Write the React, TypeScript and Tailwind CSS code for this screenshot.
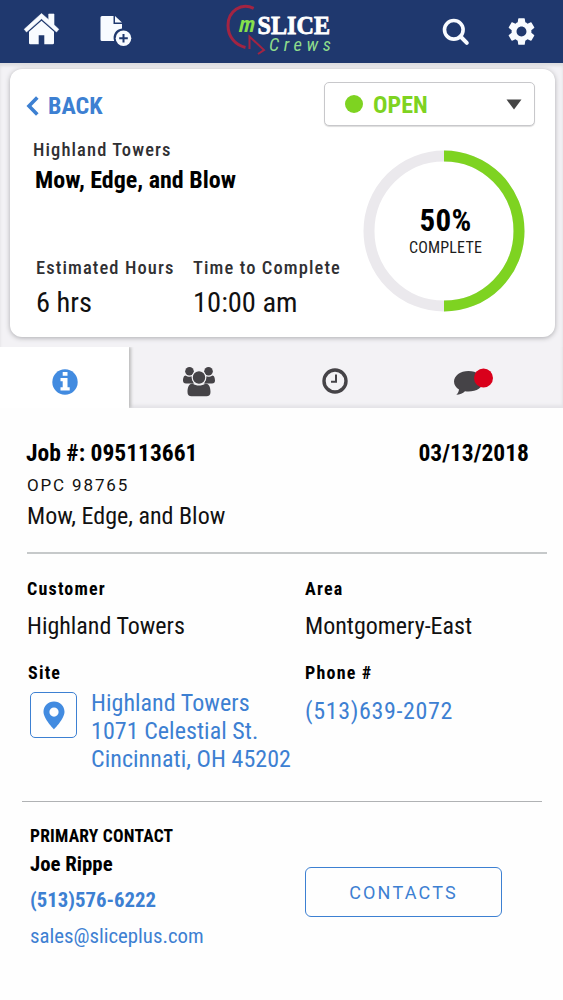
import React from "react";
import { MdSettings } from "react-icons/md";

const sans = "font-['Roboto_Condensed','Roboto',sans-serif] [font-stretch:75%]";

function HomeIcon() {
  return (
    <svg width="37" height="34" viewBox="0 0 37 34" fill="#f8fbff">
      <path d="M18.500 1.500L1.200 17.300l2.300 2.700L18.500 6.800l15 13.200 2.300-2.700-4.800-4.500V2h-5.300v5.800Z" strokeLinejoin="round" stroke="#f8fbff" strokeWidth=".6" />
      <path d="M18.500 8.800L6 19.800V31a1.300 1.300 0 0 0 1.300 1.300h8.400v-9h5.600v9h8.400A1.300 1.300 0 0 0 31 31V19.800Z" />
    </svg>
  );
}

function FilePlusIcon() {
  return (
    <svg width="32" height="32" viewBox="0 0 32 32" fill="#f8fbff">
      <path d="M2 1h11.500v8H22v4.500A9.200 9.200 0 0 0 14.200 26H2a1.500 1.500 0 0 1-1.500-1.500v-22A1.500 1.500 0 0 1 2 1Z" />
      <path d="M15 1l7 6.500H15Z" />
      <circle cx="23.500" cy="23.300" r="7.800" />
      <path d="M23.500 19v8.600M19.200 23.300h8.600" stroke="#1f386e" strokeWidth="2" />
    </svg>
  );
}

function SearchIcon() {
  return (
    <svg width="28" height="28" viewBox="0 0 28 28" fill="none" stroke="#f8fbff">
      <circle cx="11.800" cy="11.800" r="9.300" strokeWidth="3.600" />
      <path d="M18.500 18.500l6.300 6.300" strokeWidth="4" strokeLinecap="round" />
    </svg>
  );
}

function Logo() {
  return (
    <svg width="112" height="56" viewBox="0 0 112 56">
      <g fill="none" stroke="#a32442">
        <path d="M33.700 5.300C21-.5 8 8 8 22.500c0 11.500 7.500 19.500 17.500 22" strokeWidth="3" />
        <path d="M29.500 46V33.500L44 47l-6 4" strokeWidth="2" />
      </g>
      <text x="19" y="29.300" fill="#86e04c" fontFamily="Open Sans" fontWeight="700" fontStyle="italic" fontSize="22" textLength="16" lengthAdjust="spacingAndGlyphs">m</text>
      <text x="37.500" y="31" fill="#fff" stroke="#fff" strokeWidth=".8" fontFamily="Liberation Serif" fontWeight="700" fontSize="25" textLength="72.500" lengthAdjust="spacingAndGlyphs">SLICE</text>
      <text x="49" y="47.700" fill="#8fdc8c" fontFamily="Roboto Condensed" fontStyle="italic" fontSize="18.500" textLength="62">Crews</text>
    </svg>
  );
}

function InfoIcon() {
  return (
    <svg width="26" height="26" viewBox="0 0 26 26">
      <circle cx="13" cy="13" r="12.700" fill="#428be0" />
      <path d="M10.700 3h4.800v3.700h-4.800ZM8.500 9h7v9.300h2.200v3.300H8.500v-3.300h2.200v-6H8.500Z" fill="#fff" />
    </svg>
  );
}

function PeopleIcon() {
  return (
    <svg width="34" height="32" viewBox="0 0 34 32" fill="#454347">
      <circle cx="7.500" cy="5.200" r="4.300" />
      <circle cx="26.500" cy="5.200" r="4.300" />
      <path d="M3.500 9.500c2 1.500 5 1.500 7 .8-.6 3 .3 5.700 1.800 7.200H4c-2 0-3-1-3-3 0-2 .7-5 2.500-5ZM30.500 9.500c-2 1.500-5 1.500-7 .8.600 3-.3 5.700-1.800 7.200H30c2 0 3-1 3-3 0-2-.7-5-2.500-5Z" />
      <circle cx="17" cy="11.500" r="6.800" stroke="#f3f2f5" strokeWidth="1.200" />
      <path d="M10.500 17.500c4 2.700 9 2.700 13 0 3.500.5 5 3.500 5 8.500 0 3-1.500 4.300-4 4.300h-15c-2.500 0-4-1.300-4-4.300 0-5 1.500-8 5-8.500Z" />
    </svg>
  );
}

function ClockIcon() {
  return (
    <svg width="26" height="26" viewBox="0 0 26 26" fill="none" stroke="#454347">
      <circle cx="13" cy="13" r="11" strokeWidth="3.400" />
      <path d="M14 6.500v7.300H9" strokeWidth="2" />
    </svg>
  );
}

function ChatIcon() {
  return (
    <svg width="40" height="30" viewBox="0 0 40 30">
      <path d="M15.500 4C7.300 4 1 8.700 1 14.500c0 3.300 2 6.200 5 8-.2 2.200-1.200 3.800-2.700 5.300 3.500-.1 6.500-1.500 8.700-3.500 10 1.300 18-3.200 18-9.800C30 8.700 23.700 4 15.500 4Z" fill="#454347" />
      <circle cx="30.500" cy="11" r="9.500" fill="#d9001b" />
    </svg>
  );
}

function PinIcon() {
  return (
    <svg width="22" height="29" viewBox="0 0 22 29">
      <path fillRule="evenodd" d="M11 .5C5 .5.500 5 .500 10.800.500 18 11 28.300 11 28.300S21.500 18 21.500 10.800C21.500 5 17 .5 11 .5Zm0 6a4.600 4.600 0 1 1 0 9.200 4.600 4.600 0 0 1 0-9.200Z" fill="#428be0" />
    </svg>
  );
}

function ProgressRing() {
  return (
    <div className="grid h-[162px] w-[162px] [grid-template-areas:'stack']">
      <svg className="[grid-area:stack]" width="162" height="162" viewBox="0 0 162 162" fill="none" strokeWidth="11">
        <circle cx="81" cy="81" r="75" stroke="#ebe9ed" />
        <path d="M81 6a75 75 0 0 1 0 150" stroke="#7ed321" />
      </svg>
      <div className="flex flex-col items-center pl-[3px] pt-[55px] [grid-area:stack]">
        <div className="text-[31px] font-bold leading-[32px] tracking-[0.300px] text-black">50%</div>
        <div className="mt-px text-[16px] leading-[20px] tracking-[0.200px] text-[#1c1c1c]">COMPLETE</div>
      </div>
    </div>
  );
}

export default function App() {
  return (
    <div className={`h-[1000px] w-[563px] overflow-hidden bg-[#fefefe] text-[#111] whitespace-nowrap ${sans}`}>
      <header className="flex h-[63px] items-start bg-[#1f386e]">
        <div className="ml-[23px] mt-[12px]"><HomeIcon /></div>
        <div className="ml-[40px] mt-[15px]"><FilePlusIcon /></div>
        <div className="ml-[88px] mt-[3px]"><Logo /></div>
        <div className="ml-[110px] mt-[18px]"><SearchIcon /></div>
        <MdSettings className="ml-[35px] mt-[15px] h-[33px] w-[33px] text-[#f8fbff]" />
      </header>

      <section className="h-[345px] bg-[#f3f2f5] pt-[6px] shadow-[inset_0_3px_3px_#dddde0]">
        <div className="ml-[10px] flex h-[268px] w-[545px] rounded-[12px] bg-white shadow-[0_1px_5px_#aaaaae]">
          <div className="w-[314px] shrink-0 pt-[23px]">
            <div className="ml-[16px] flex h-[28px] items-center text-[24px] font-bold leading-[28px] text-[#3d80d2]">
              <svg width="13" height="20" viewBox="0 0 13 20" fill="none" stroke="currentColor" strokeWidth="3.600">
                <path d="M11.300 1.500L3 10l8.300 8.500" />
              </svg>
              <span className="ml-[9px]">BACK</span>
            </div>
            <div className="ml-[23px] mt-[18px] text-[18.500px] font-medium leading-[24px] tracking-[1.100px] text-[#303033]">Highland Towers</div>
            <div className="ml-[25px] mt-[6px] text-[24px] font-bold leading-[24px] text-black">Mow, Edge, and Blow</div>
            <div className="mt-[64px] flex">
              <div className="ml-[26px] w-[157px] shrink-0">
                <div className="text-[18.500px] font-medium leading-[24px] tracking-[1.100px] text-[#303033]">Estimated Hours</div>
                <div className="mt-[7px] text-[28.500px] leading-[32px]">6 hrs</div>
              </div>
              <div className="shrink-0">
                <div className="text-[18.500px] font-medium leading-[24px] tracking-[1.100px] text-[#303033]">Time to Complete</div>
                <div className="mt-[7px] text-[28.500px] leading-[32px]">10:00 am</div>
              </div>
            </div>
          </div>
          <div className="pt-[13px]">
            <button className="flex h-[44px] w-[211px] items-center rounded-[5px] border border-[#c8c8cb] bg-white shadow-[0_1px_1px_#ddd]">
              <span className="ml-[20px] h-[18px] w-[18px] rounded-full bg-[#7ed321]" />
              <span className="ml-[10px] mt-[1px] w-[133px] text-left text-[24px] font-bold leading-[28px] text-[#7ed321]">OPEN</span>
              <svg width="16" height="11" viewBox="0 0 16 11"><path d="M.5.500h15L8 10.500Z" fill="#454545" /></svg>
            </button>
            <div className="ml-[39px] mt-[24px]"><ProgressRing /></div>
          </div>
        </div>
        <nav className="mt-[10px] flex h-[61px] shadow-[inset_0_-3px_3px_#e5e4e8]">
          <div className="flex w-[129px] items-center justify-center bg-white pt-[8px] shadow-[2px_0_3px_#bbb] [clip-path:inset(0_-6px_0_0)]">
            <InfoIcon />
          </div>
          <div className="ml-[53px] mt-[19px]"><PeopleIcon /></div>
          <div className="ml-[106px] mt-[21px]"><ClockIcon /></div>
          <div className="ml-[105px] mt-[20px]"><ChatIcon /></div>
        </nav>
      </section>

      <main>
        <section className="ml-[26px] mt-[31px] flex w-[503px] justify-between text-[23.500px] font-bold leading-[28px] text-black">
          <span>Job #: 095113661</span>
          <span>03/13/2018</span>
        </section>
        <div className="ml-[27px] mt-[8px] font-['Roboto',sans-serif] text-[17px] leading-[20px] tracking-[1.850px] [font-stretch:100%]">OPC 98765</div>
        <div className="ml-[27px] mt-[7px] text-[24px] leading-[28px]">Mow, Edge, and Blow</div>
        <div className="ml-[27px] mt-[22px] h-[2px] w-[520px] bg-[#c6c9ca]" />

        <section className="mt-[23px] flex h-[224px]">
          <div className="w-[305px]">
            <div className="ml-[27px] text-[18px] font-bold leading-[24px] tracking-[1.200px] text-black">Customer</div>
            <div className="ml-[27px] mt-[11px] text-[24px] leading-[28px]">Highland Towers</div>
            <div className="ml-[28px] mt-[21px] text-[18px] font-bold leading-[24px] tracking-[1.200px] text-black">Site</div>
            <div className="ml-[30px] mt-[4px] flex items-start text-[#3d80d2]">
              <div className="mt-[3px] flex h-[46px] w-[47px] items-center justify-center rounded-[5px] border-[1.500px] border-[#3d80d2]">
                <PinIcon />
              </div>
              <div className="ml-[14px] text-[24px] leading-[28.200px] tracking-[0.050px]">
                <div>Highland Towers</div>
                <div>1071 Celestial St.</div>
                <div>Cincinnati, OH 45202</div>
              </div>
            </div>
          </div>
          <div>
            <div className="text-[18px] font-bold leading-[24px] tracking-[1.200px] text-black">Area</div>
            <div className="mt-[11px] text-[24px] leading-[28px]">Montgomery-East</div>
            <div className="mt-[21px] text-[18px] font-bold leading-[24px] tracking-[1.200px] text-black">Phone #</div>
            <div className="mt-[12px] text-[24px] leading-[28px] tracking-[0.650px] text-[#3d80d2]">(513)639-2072</div>
          </div>
        </section>

        <div className="ml-[22px] h-px w-[520px] bg-[#b0b2b4]" />
        <section className="flex pt-[24px]">
          <div className="ml-[30px] w-[275px]">
            <div className="text-[17.500px] font-bold leading-[20px] tracking-[0.220px] text-black">PRIMARY CONTACT</div>
            <div className="mt-[6px] text-[20.800px] font-bold leading-[24px] text-black">Joe Rippe</div>
            <div className="mt-[12px] text-[20.800px] font-bold leading-[24px] text-[#3d80d2]">(513)576-6222</div>
            <div className="mt-[12px] text-[20.800px] leading-[24px] text-[#3d80d2]">sales@sliceplus.com</div>
          </div>
          <button className="mt-[41px] h-[50px] w-[197px] rounded-[6px] border-[1.500px] border-[#3d80d2] pt-px font-['Roboto',sans-serif] text-[18px] tracking-[2.200px] text-[#3d80d2] [font-stretch:100%]">CONTACTS</button>
        </section>
      </main>
    </div>
  );
}
